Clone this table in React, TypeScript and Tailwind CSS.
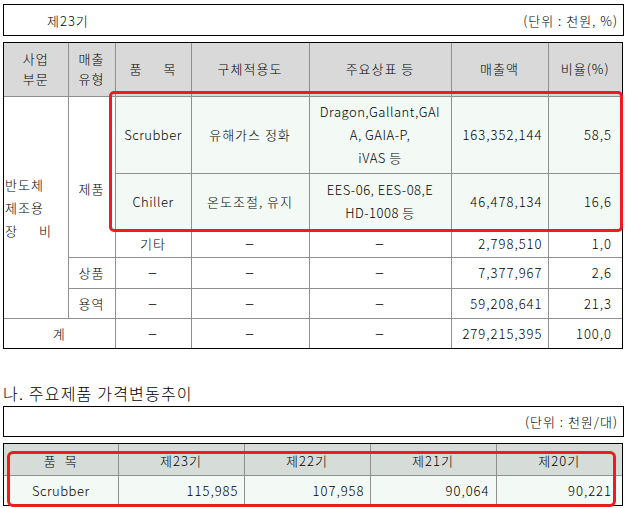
import React from "react";

const F = {
  fontFamily: '"Noto Sans CJK KR", "Liberation Sans", sans-serif',
};

const c = "border border-[#8f8f8f] p-0";
const L = "tracking-[0.5px]";

function Dash() {
  return <span className="text-[17px] leading-none">–</span>;
}

export default function App() {
  return (
    <div
      className="relative w-[625px] h-[508px] bg-white text-[13px] font-light text-black tracking-[1px] overflow-hidden"
      style={F}
    >
      {/* unit box 1 */}
      <div className="ml-[3px] mt-[4px] w-[621px] h-[32px] border border-black flex items-center justify-between pl-[43px] pr-[5px] leading-none">
        <span>제23기</span>
        <span>(단위 : 천원, %)</span>
      </div>

      {/* table 1 */}
      <div className="ml-[3px] mt-[6px] w-[620px] border border-black">
        <table className="w-full table-fixed border-collapse border-hidden leading-[23px]">
          <colgroup>
            <col className="w-[64px]" />
            <col className="w-[47px]" />
            <col className="w-[76px]" />
            <col className="w-[118px]" />
            <col className="w-[142px]" />
            <col className="w-[97px]" />
            <col className="w-[74px]" />
          </colgroup>
          <tbody>
            <tr className="h-[53px] bg-[#d9d9d9] text-center leading-[20px]">
              <td className={c}>
                사업
                <br />
                부문
              </td>
              <td className={c}>
                매출
                <br />
                유형
              </td>
              <td className={c}>
                <span className="inline-flex gap-[21px]">
                  <span>품</span>
                  <span>목</span>
                </span>
              </td>
              <td className={c}>구체적용도</td>
              <td className={c}>주요상표 등</td>
              <td className={c}>매출액</td>
              <td className={c}>비율(%)</td>
            </tr>
            <tr className="h-[77px] text-center">
              <td className={c + " text-left pl-[1px] bg-white"} rowSpan={5}>
                <div className="inline-flex flex-col w-[47px]">
                  <span>반도체</span>
                  <span>제조용</span>
                  <span className="flex justify-between">
                    <span>장</span>
                    <span>비</span>
                  </span>
                </div>
              </td>
              <td className={c + " bg-white pt-[24px]"} rowSpan={3}>
                제품
              </td>
              <td className={c + " bg-[#f3f9f5] " + L}>Scrubber</td>
              <td className={c + " bg-[#f3f9f5]"}>유해가스 정화</td>
              <td className={c + " bg-[#f3f9f5] " + L}>
                Dragon,Gallant,GAI
                <br />
                A, GAIA-P,
                <br />
                iVAS 등
              </td>
              <td className={c + " bg-[#f3f9f5] text-right pr-[5px]"}>163,352,144</td>
              <td className={c + " bg-[#f3f9f5] text-right pr-[10px]"}>58,5</td>
            </tr>
            <tr className="h-[56px] text-center bg-[#f3f9f5]">
              <td className={c + " " + L}>Chiller</td>
              <td className={c}>온도조절, 유지</td>
              <td className={c + " " + L}>
                EES-06, EES-08,E
                <br />
                HD-1008 등
              </td>
              <td className={c + " text-right pr-[5px]"}>46,478,134</td>
              <td className={c + " text-right pr-[10px]"}>16,6</td>
            </tr>
            <tr className="h-[28px] text-center">
              <td className={c}>기타</td>
              <td className={c}><Dash /></td>
              <td className={c}><Dash /></td>
              <td className={c + " text-right pr-[5px]"}>2,798,510</td>
              <td className={c + " text-right pr-[10px]"}>1,0</td>
            </tr>
            <tr className="h-[31px] text-center">
              <td className={c}>상품</td>
              <td className={c}><Dash /></td>
              <td className={c}><Dash /></td>
              <td className={c}><Dash /></td>
              <td className={c + " text-right pr-[5px]"}>7,377,967</td>
              <td className={c + " text-right pr-[10px]"}>2,6</td>
            </tr>
            <tr className="h-[30px] text-center">
              <td className={c}>용역</td>
              <td className={c}><Dash /></td>
              <td className={c}><Dash /></td>
              <td className={c}><Dash /></td>
              <td className={c + " text-right pr-[5px]"}>59,208,641</td>
              <td className={c + " text-right pr-[10px]"}>21,3</td>
            </tr>
            <tr className="h-[30px] text-center">
              <td className={c} colSpan={2}>
                계
              </td>
              <td className={c}><Dash /></td>
              <td className={c}><Dash /></td>
              <td className={c}><Dash /></td>
              <td className={c + " text-right pr-[5px]"}>279,215,395</td>
              <td className={c + " text-right pr-[10px]"}>100,0</td>
            </tr>
          </tbody>
        </table>
      </div>

      {/* section title */}
      <div className="ml-[3px] mt-[33px] h-[22px] leading-[22px] text-[16px] tracking-[1.2px]">
        나. 주요제품 가격변동추이
      </div>

      {/* unit box 2 */}
      <div className="ml-[3px] mt-[2px] w-[621px] h-[31px] border border-black flex items-center justify-end pr-[5px] leading-none">
        <span>(단위 : 천원/대)</span>
      </div>

      {/* table 2 */}
      <div className="ml-[3px] mt-[6px] w-[620px] border border-black">
        <table className="w-full table-fixed border-collapse border-hidden leading-[23px]">
          <colgroup>
            <col className="w-[114px]" />
            <col className="w-[126px]" />
            <col className="w-[126px]" />
            <col className="w-[126px]" />
            <col className="w-[126px]" />
          </colgroup>
          <tbody>
            <tr className="h-[31px] bg-[#d6ddd9] text-center">
              <td className={c + " pt-[2px]"}>
                <span className="inline-flex gap-[8px]">
                  <span>품</span>
                  <span>목</span>
                </span>
              </td>
              <td className={c + " pt-[2px]"}>제23기</td>
              <td className={c + " pt-[2px]"}>제22기</td>
              <td className={c + " pt-[2px]"}>제21기</td>
              <td className={c + " pt-[2px]"}>제20기</td>
            </tr>
            <tr className="h-[30px] bg-[#f3f9f5] text-center">
              <td className={c + " " + L}>Scrubber</td>
              <td className={c + " text-right pr-[5px]"}>115,985</td>
              <td className={c + " text-right pr-[5px]"}>107,958</td>
              <td className={c + " text-right pr-[6px]"}>90,064</td>
              <td className={c + " text-right pr-[10px]"}>90,221</td>
            </tr>
          </tbody>
        </table>
      </div>

      {/* highlight overlays */}
      <div className="absolute left-[109px] top-[91px] w-[514px] h-[141px] border-[3px] border-[#ee1c1c] rounded-[5px] pointer-events-none" />
      <div className="absolute left-[7px] top-[451px] w-[609px] h-[56px] border-[3px] border-[#ee1c1c] rounded-[6px] pointer-events-none" />
    </div>
  );
}
